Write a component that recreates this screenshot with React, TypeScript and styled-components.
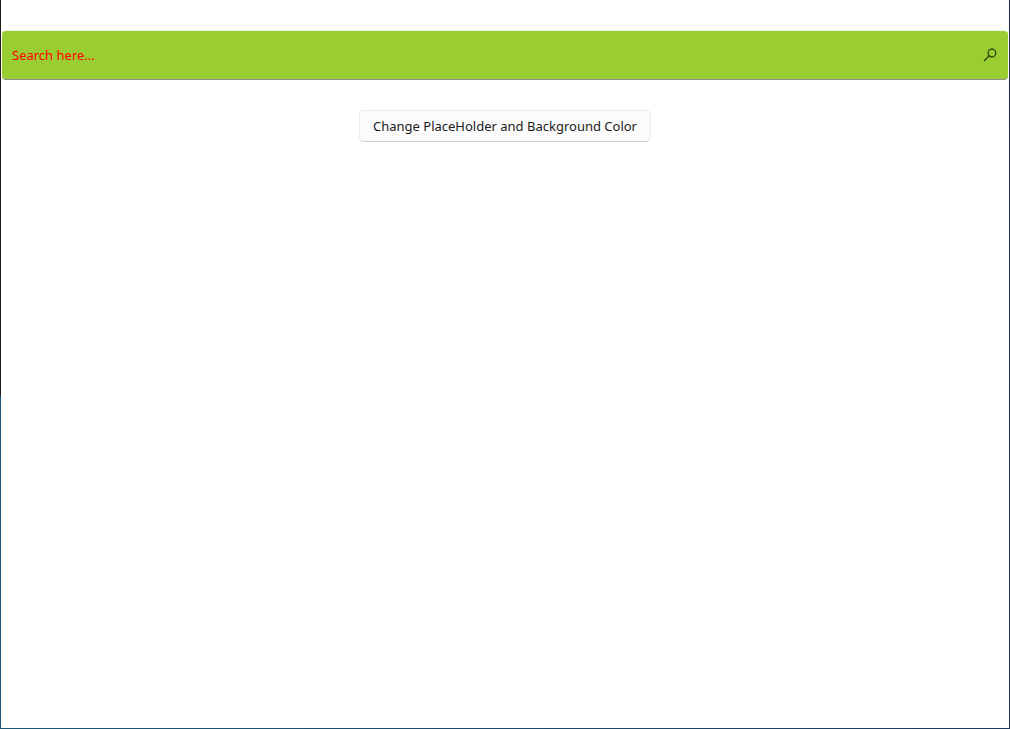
import React, { useState } from "react";
import styled, { createGlobalStyle } from "styled-components";

const GlobalStyle = createGlobalStyle`
  *, *::before, *::after { box-sizing: border-box; }
  body { margin: 0; background: #ffffff; }
  body, input, button { font-family: "Noto Sans", "Open Sans", sans-serif; font-size: 13px; }
`;

/* Window with the thin frame that runs along its left, right and bottom edges. */
const Window = styled.div`
  min-height: 100vh;
  padding: 1px;
  background:
    linear-gradient(90deg, #1b5878, #1f3a5c) bottom / 100% 1px no-repeat,
    linear-gradient(#1c1c1e 396px, #1b5878 396px) left / 1px 100% no-repeat,
    linear-gradient(#1c2f50, #1f3558) right / 1px 100% no-repeat,
    #ffffff;
`;

const Content = styled.main`
  display: flex;
  flex-direction: column;
  align-items: center;
  gap: 30px;
  padding: 29px 1px;
`;

const SearchBar = styled.form<{ $fill: string }>`
  display: flex;
  align-items: center;
  width: 100%;
  height: 50px;
  padding: 0 2px 0 10px;
  background: ${(p) => p.$fill};
  background-clip: padding-box;
  border: solid rgba(0, 0, 0, 0.06);
  border-width: 1px 0;
  border-bottom-color: rgba(0, 0, 0, 0.45);
  border-radius: 4px;
`;

const SearchInput = styled.input<{ $placeholder: string }>`
  flex: 1;
  min-width: 0;
  height: 32px;
  padding: 0;
  border: 0;
  outline: 0;
  background: transparent;
  color: #1b1b1b;
  &::placeholder { color: ${(p) => p.$placeholder}; opacity: 1; }
`;

const SearchButton = styled.button`
  display: grid;
  place-items: center;
  width: 32px;
  height: 32px;
  padding: 0;
  border: 0;
  background: transparent;
  color: #26330f;
`;

const ActionButton = styled.button`
  height: 32px;
  padding: 0 13px;
  border: 1px solid #ececec;
  border-bottom-color: #cfcfcf;
  border-radius: 5px;
  background: #fbfbfb;
  color: #1b1b1b;
  line-height: 20px;
  white-space: nowrap;
`;

function SearchIcon() {
  return (
    <svg width="14" height="14" viewBox="0 0 14 14" fill="none" stroke="currentColor" strokeWidth="1.1" aria-hidden="true">
      <circle cx="8.9" cy="5" r="3.9" />
      <path d="M6.1 7.8 1.4 12.5" strokeWidth="1.2" strokeLinecap="round" />
    </svg>
  );
}

export default function App() {
  const [changed, setChanged] = useState(true);
  return (
    <Window>
      <GlobalStyle />
      <Content>
        <SearchBar $fill={changed ? "#9acd32" : "#ffffff"} role="search" onSubmit={(e) => e.preventDefault()}>
          <SearchInput $placeholder={changed ? "#ff0000" : "#606060"} type="text" aria-label="Search" placeholder="Search here..." />
          <SearchButton type="submit" aria-label="Submit search">
            <SearchIcon />
          </SearchButton>
        </SearchBar>
        <ActionButton type="button" onClick={() => setChanged(!changed)}>
          Change PlaceHolder and Background Color
        </ActionButton>
      </Content>
    </Window>
  );
}
